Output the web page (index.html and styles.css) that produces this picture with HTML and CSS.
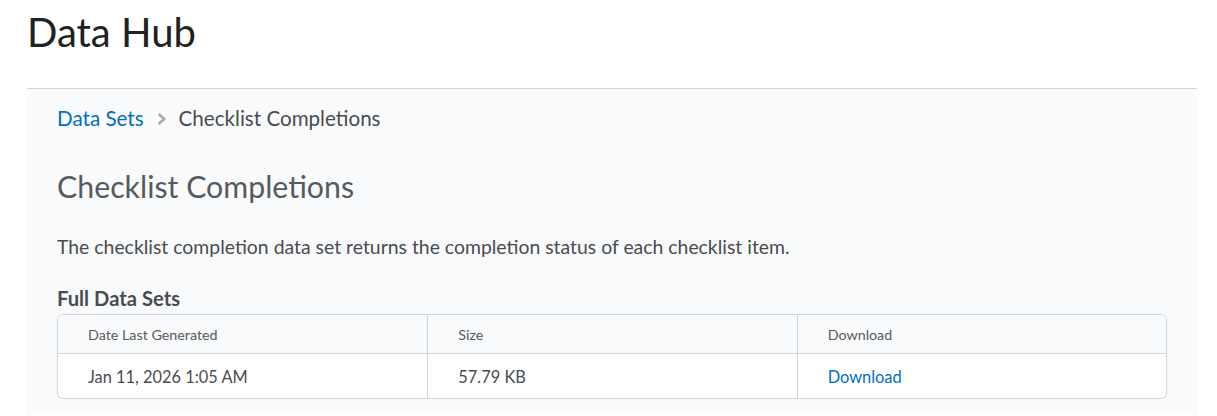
FILE: index.html
```html
<!DOCTYPE html>
<html lang="en">
<head>
<meta charset="utf-8">
<title>Data Hub</title>
<link rel="stylesheet" href="styles.css">
</head>
<body>
<div class="page">
  <h1 class="page-title">Data Hub</h1>
  <section class="panel">
    <nav class="breadcrumbs">
      <a class="crumb-link" href="#">Data Sets</a>
      <svg class="chevron" width="10" height="12" viewBox="0 0 10 12" aria-hidden="true"><path d="M2.5 1.8 L7.2 6 L2.5 10.2" fill="none" stroke="#a9acaf" stroke-width="2.8" stroke-linecap="round" stroke-linejoin="round"/></svg>
      <span class="crumb-current">Checklist Completions</span>
    </nav>
    <h2 class="ds-title">Checklist Completions</h2>
    <p class="ds-desc">The checklist completion data set returns the completion status of each checklist item.</p>
    <h3 class="ds-sub">Full Data Sets</h3>
    <div class="table">
      <div class="row head">
        <div class="cell">Date Last Generated</div>
        <div class="cell">Size</div>
        <div class="cell">Download</div>
      </div>
      <div class="row body">
        <div class="cell">Jan 11, 2026 1:05 AM</div>
        <div class="cell">57.79 KB</div>
        <div class="cell"><a class="dl" href="#">Download</a></div>
      </div>
    </div>
  </section>
</div>
</body>
</html>
```

FILE: styles.css
```css
html, body {
  margin: 0;
  padding: 0;
  background: #ffffff;
  font-family: Lato, "Noto Sans", sans-serif;
  color: #494c4e;
}
.page {
  padding: 0 20px 0 27px;
}
.page-title {
  margin: 0;
  padding-top: 8px;
  height: 88px;
  box-sizing: border-box;
  font-size: 40px;
  font-weight: 400;
  line-height: 48px;
  color: #202122;
}
.panel {
  border-top: 1px solid #cdd5dc;
  background: #f9fafc;
  padding: 14px 30px 30px 30px;
  height: 327px;
  box-sizing: border-box;
}
.breadcrumbs {
  display: flex;
  align-items: center;
  height: 30px;
  font-size: 20.6px;
}
.crumb-link {
  color: #006fbf;
  text-decoration: none;
}
.chevron {
  margin: 1px 12px 0 13px;
}
.crumb-current {
  color: #494c4e;
}
.ds-title {
  margin: 35px 0 0 0;
  font-size: 30.3px;
  font-weight: 400;
  line-height: 36px;
  color: #565a5c;
}
.ds-desc {
  margin: 29px 0 0 0;
  font-size: 19.4px;
  line-height: 28px;
}
.ds-sub {
  margin: 25px 0 0 0;
  font-size: 20.2px;
  font-weight: 700;
  line-height: 24px;
  color: #494c4e;
}
.table {
  margin-top: 4px;
  border: 1px solid #cdd5dc;
  border-radius: 6px;
  overflow: hidden;
  background: #ffffff;
}
.row {
  display: grid;
  grid-template-columns: 1fr 1fr 1fr;
}
.row.head {
  background: #f9fafc;
  height: 38px;
  border-bottom: 1px solid #cdd5dc;
  font-size: 14.3px;
  color: #565a5c;
}
.row.body {
  height: 44px;
  font-size: 16.4px;
}
.cell {
  display: flex;
  align-items: center;
  padding-left: 30px;
}
.cell + .cell {
  border-left: 1px solid #cdd5dc;
}
.dl {
  color: #006fbf;
  text-decoration: none;
}
```
